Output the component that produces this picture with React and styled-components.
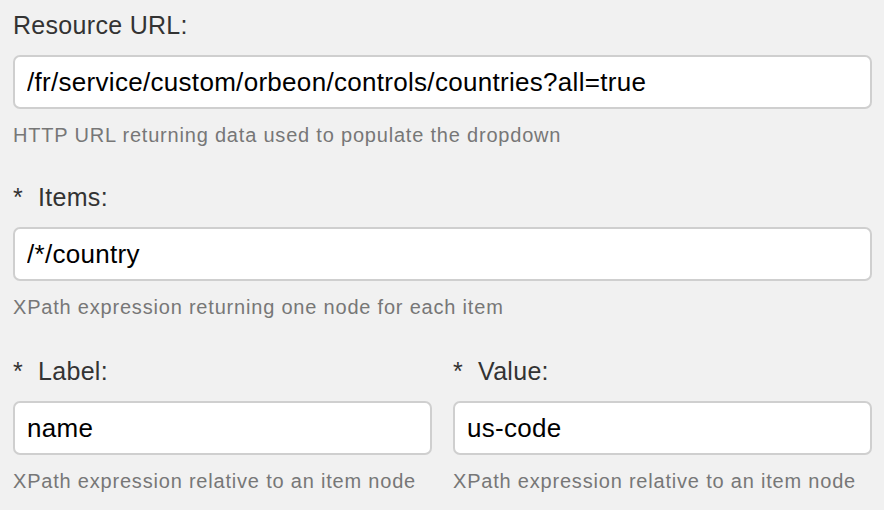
import React from 'react';
import styled, { createGlobalStyle } from 'styled-components';

const GlobalStyle = createGlobalStyle`
  html, body {
    margin: 0;
    padding: 0;
    background: #f1f1f1;
  }
  body {
    font-family: "Liberation Sans", Arial, sans-serif;
  }
`;

const Page = styled.div`
  padding: 10px 12px 0 13px;
  display: flex;
  flex-direction: column;
  gap: 35px;
`;

const Row = styled.div`
  display: grid;
  grid-template-columns: 1fr 1fr;
  column-gap: 21px;
  margin-top: 2px;
`;

const Field = styled.div`
  display: flex;
  flex-direction: column;
`;

const Label = styled.label`
  font-size: 25px;
  line-height: 30px;
  letter-spacing: 0.3px;
  color: #333;
  margin-bottom: 15px;
`;

const Required = styled.span`
  margin-right: 15px;
`;

const Input = styled.input`
  box-sizing: border-box;
  height: 54px;
  width: 100%;
  border: 2px solid #cfcfcf;
  border-radius: 7px;
  background: #fff;
  padding: 0 12px;
  font-family: inherit;
  font-size: 26px;
  letter-spacing: 0.3px;
  color: #000;
  outline: none;
`;

const Help = styled.div`
  margin-top: 14px;
  font-size: 20px;
  line-height: 24px;
  letter-spacing: 0.8px;
  color: #777;
`;

const FormField = ({ label, required, value, help }) => (
  <Field>
    <Label>
      {required && <Required>*</Required>}
      {label}
    </Label>
    <Input defaultValue={value} />
    <Help>{help}</Help>
  </Field>
);

export default function App() {
  return (
    <>
      <GlobalStyle />
      <Page>
        <FormField
          label="Resource URL:"
          value="/fr/service/custom/orbeon/controls/countries?all=true"
          help="HTTP URL returning data used to populate the dropdown"
        />
        <FormField
          label="Items:"
          required
          value="/*/country"
          help="XPath expression returning one node for each item"
        />
        <Row>
          <FormField
            label="Label:"
            required
            value="name"
            help="XPath expression relative to an item node"
          />
          <FormField
            label="Value:"
            required
            value="us-code"
            help="XPath expression relative to an item node"
          />
        </Row>
      </Page>
    </>
  );
}
